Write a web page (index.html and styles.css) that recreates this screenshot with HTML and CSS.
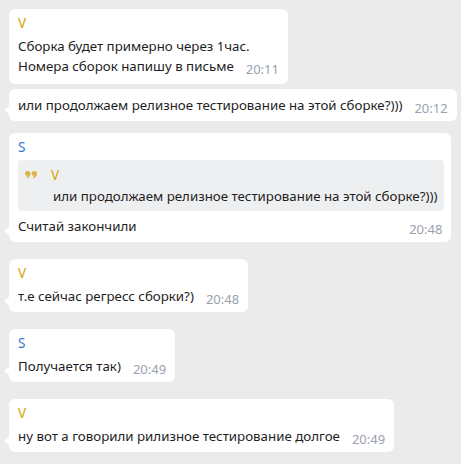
FILE: index.html
```html
<!DOCTYPE html>
<html lang="ru">
<head>
<meta charset="utf-8">
<link rel="stylesheet" href="styles.css">
</head>
<body>
<div class="chat">
  <div class="msg first">
    <div class="name v">V</div>
    <div class="text">Сборка будет примерно через 1час.<br>Номера сборок напишу в письме<span class="time">20:11</span></div>
  </div>
  <div class="msg cont tail">
    <div class="text">или продолжаем релизное тестирование на этой сборке?)))<span class="time">20:12</span></div>
  </div>
  <div class="msg group tail gap12">
    <div class="name s">S</div>
    <div class="quote">
      <div class="qicon">
        <svg width="12" height="7" viewBox="0 0 12 7"><path d="M2.7 0a2.7 2.7 0 0 1 2.7 2.7C5.4 4.9 3.8 6.6 1.5 7.1L1.1 6.2c1-.4 1.6-1 1.8-1.6A2.4 2.4 0 0 1 0 2.7 2.7 2.7 0 0 1 2.7 0zM9.3 0A2.7 2.7 0 0 1 12 2.7c0 2.2-1.6 3.9-3.9 4.4l-.4-.9c1-.4 1.6-1 1.8-1.6a2.4 2.4 0 0 1-2.9-1.9A2.7 2.7 0 0 1 9.3 0z" fill="#d8b446"/></svg>
      </div>
      <div class="qbody">
        <div class="name v">V</div>
        <div class="qtext">или продолжаем релизное тестирование на этой сборке?)))</div>
      </div>
    </div>
    <div class="row">
      <div class="text">Считай закончили</div>
      <span class="time">20:48</span>
    </div>
  </div>
  <div class="msg group tail">
    <div class="name v">V</div>
    <div class="text">т.е сейчас регресс сборки?)<span class="time">20:48</span></div>
  </div>
  <div class="msg group tail">
    <div class="name s">S</div>
    <div class="text">Получается так)<span class="time">20:49</span></div>
  </div>
  <div class="msg group tail">
    <div class="name v">V</div>
    <div class="text">ну вот а говорили рилизное тестирование долгое<span class="time">20:49</span></div>
  </div>
</div>
</body>
</html>
```

FILE: styles.css
```css
html, body {
  margin: 0;
  padding: 0;
  background: #ebebeb;
}
body {
  font-family: "Noto Sans", "Open Sans", sans-serif;
  font-size: 13.3px;
  color: #1e1e1e;
}
.chat {
  display: flex;
  flex-direction: column;
  align-items: flex-start;
  padding: 9px;
}
.msg {
  position: relative;
  background: #fff;
  border-radius: 6px;
  padding: 4px 7px 6px 9px;
  box-sizing: border-box;
}
.msg.first {
  padding-bottom: 8px;
}
.msg.cont {
  margin-top: 5px;
  padding-top: 6px;
}
.msg.group {
  margin-top: 17px;
}
.msg.gap12 {
  margin-top: 12px;
}
.msg.tail::before {
  content: "";
  position: absolute;
  left: -5px;
  bottom: 7px;
  border-right: 5px solid #fff;
  border-top: 4px solid transparent;
  border-bottom: 4px solid transparent;
}
.name {
  font-size: 13.5px;
  line-height: 20px;
  height: 20px;
}
.name.v { color: #d9a200; }
.name.s { color: #3478d0; }
.name + .text {
  margin-top: 3px;
}
.text {
  line-height: 20px;
  white-space: nowrap;
}
.time {
  display: inline-block;
  margin-left: 12px;
  padding-right: 2px;
  font-size: 13px;
  line-height: 12px;
  vertical-align: -3px;
  color: #97a2ae;
}
.row {
  display: flex;
  align-items: baseline;
  margin-top: 5px;
}
.row .time {
  margin-left: auto;
  transform: translateY(3px);
}
.quote {
  display: flex;
  background: #eeeff1;
  border-radius: 4px;
  margin-top: 3px;
  padding: 5px 7px 5px 0;
}
.qicon {
  width: 35px;
  flex: none;
  padding-left: 7px;
  padding-top: 6px;
  box-sizing: border-box;
}
.qicon svg { display: block; }
.qbody .name { margin-left: -2px; }
.qtext {
  line-height: 20px;
  white-space: nowrap;
  margin-top: 1px;
}
```
